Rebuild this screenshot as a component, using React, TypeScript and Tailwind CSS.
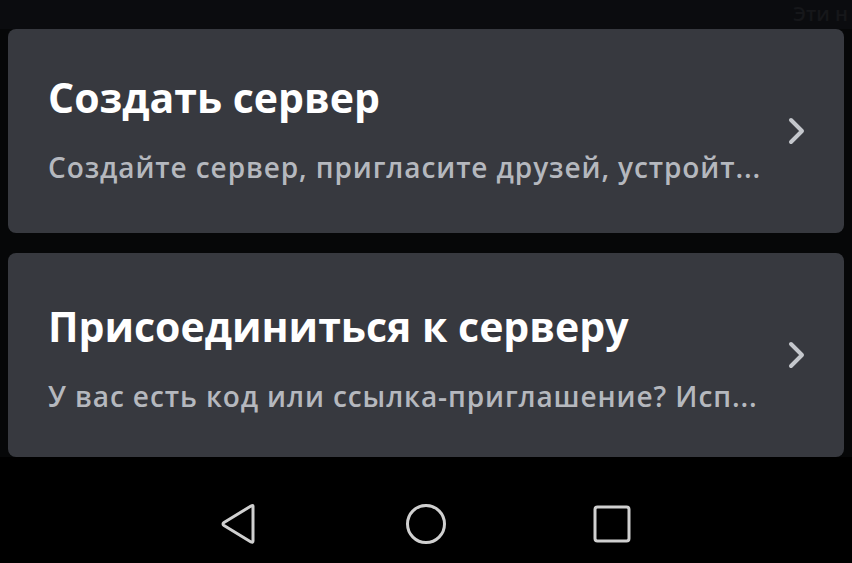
import React from 'react';

const cards = [
  {
    title: 'Создать сервер',
    subtitle: 'Создайте сервер, пригласите друзей, устройт...',
    pad: 'pt-[43px]',
  },
  {
    title: 'Присоединиться к серверу',
    subtitle: 'У вас есть код или ссылка-приглашение? Исп...',
    pad: 'pt-[48px]',
  },
];

function Chevron() {
  return (
    <svg width="22" height="30" viewBox="0 0 22 30" fill="none">
      <path d="M5 4 L16 15 L5 26" stroke="#c4c7cc" strokeWidth="4" strokeLinecap="round" strokeLinejoin="round" />
    </svg>
  );
}

export default function App() {
  return (
    <div
      className="w-[852px] h-[563px] bg-[#060708] flex flex-col overflow-hidden"
      style={{ fontFamily: '"Open Sans", "Noto Sans", sans-serif' }}
    >
      <div className="h-[29px] bg-[#0b0c0f] flex justify-end items-start pr-1">
        <span className="text-[20px] font-semibold text-[#16171a] leading-[28px]">Эти н</span>
      </div>

      <div className="flex flex-col gap-5 px-2">
        {cards.map((c) => (
          <div
            key={c.title}
            className="h-[204px] rounded-lg bg-[#37393f] flex items-center pl-10 pr-9"
          >
            <div className={`flex-1 min-w-0 self-start ${c.pad}`}>
              <div className="text-[41px] font-bold text-white leading-[50px]">
                {c.title}
              </div>
              <div className="mt-[28px] text-[28px] font-semibold text-[#b5b8be] leading-[34px] tracking-[0.9px] whitespace-nowrap">
                {c.subtitle}
              </div>
            </div>
            <Chevron />
          </div>
        ))}
      </div>

      <div className="flex-1 bg-black flex items-center justify-center gap-[144px] pt-[28px]">
        <svg width="40" height="44" viewBox="0 0 40 44" fill="none">
          <path d="M33 4 L33 39 Q33 41 31 40 L4 23.5 Q2 22 4 20.5 L31 4 Q33 3 33 4 Z" stroke="#d0d0d0" strokeWidth="3" strokeLinejoin="round" />
        </svg>
        <svg width="44" height="44" viewBox="0 0 44 44" fill="none">
          <circle cx="22" cy="22" r="18.5" stroke="#d0d0d0" strokeWidth="3" />
        </svg>
        <svg width="40" height="40" viewBox="0 0 40 40" fill="none">
          <rect x="3" y="3" width="34" height="34" rx="2.5" stroke="#d0d0d0" strokeWidth="3" />
        </svg>
      </div>
    </div>
  );
}
